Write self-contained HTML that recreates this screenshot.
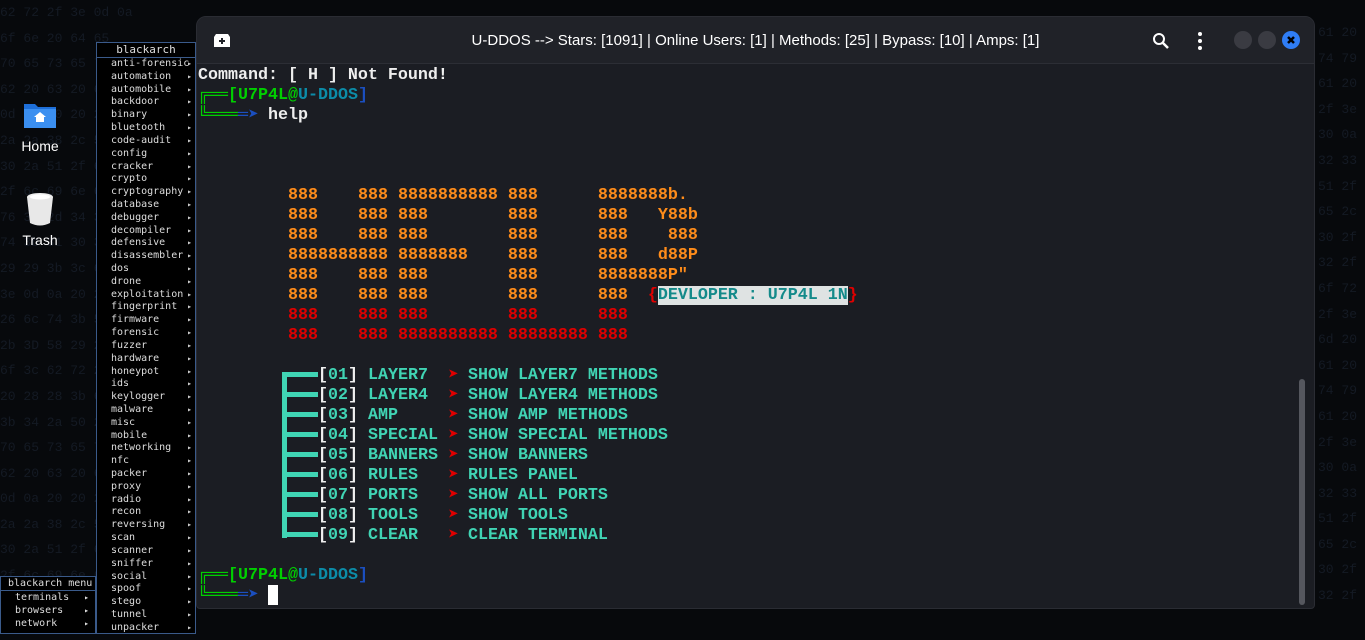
<!DOCTYPE html>
<html><head><meta charset="utf-8"><style>
*{margin:0;padding:0;box-sizing:border-box}
body{width:1365px;height:634px;background:#07090c;position:relative;overflow:hidden;font-family:"Liberation Sans",sans-serif}
.hex{position:absolute;color:#141a24;font:13px "Liberation Mono",monospace;line-height:25.6px;white-space:pre}
.menu{position:absolute;left:96px;top:42px;width:100px;height:592px;background:#000;border:1px solid #3a5a8a;font:10px "DejaVu Sans Mono",monospace;color:#ddd}
.menu .h{height:15px;text-align:center;border-bottom:1px solid #3a5a8a;line-height:14px;font-size:11px}
.menu .i{height:12.82px;line-height:12.82px;padding-left:14px;position:relative}
.menu .i:after{content:"▸";position:absolute;right:3px;font-size:8px;color:#ccc}
.bm{position:absolute;left:0;top:576px;width:96px;height:58px;background:#000;border:1px solid #3a5a8a;font:10px "DejaVu Sans Mono",monospace;color:#ddd}
.bm .h{height:14px;border-bottom:1px solid #3a5a8a;padding-left:7px;line-height:13px}
.bm .i{height:13px;line-height:13px;padding-left:14px;position:relative}
.bm .i:after{content:"▸";position:absolute;right:6px;font-size:8px}
.icon{position:absolute;color:#fff;font-size:14px;text-align:center;width:80px}
.win{position:absolute;left:196px;top:16px;width:1119px;height:593px;background:#1b1d23;border-radius:10px 10px 4px 4px;overflow:hidden;border:1px solid #2a2c33}
.tb{height:47px;background:#202228;border-bottom:1px solid #2c2e35;position:relative}
.title{position:absolute;left:0;right:0;top:15px;text-align:center;color:#fff;font-size:15px}
.t{position:absolute;font:bold 16.67px "Liberation Mono","DejaVu Sans Mono",monospace;white-space:pre;line-height:20px;color:#eee}
.o{color:#ff8c1a}.r{color:#e00000}.c{color:#40d4b4}.w{color:#f0f0f0}.g{color:#00d000}.b{color:#0c8ca8}.db{color:#1b4fc0}
.a{display:inline-block;width:10px;height:20px;line-height:20px;vertical-align:top;overflow:visible;color:#e00000;font-size:18px}
.tl{position:absolute;background:#40d4b4}
</style></head><body>
<div class="hex" style="left:0;top:0">62 72 2f 3e 0d 0a
6f 6e 20 64 65 
70 65 73 65 74
62 20 63 20 69
0d 0a 20 20 20
2a 2a 38 2c 51
30 2a 51 2f 63
2f 6c 69 6e 65
76 3d 2d 34 32
74 3b 31 30 35
29 29 3b 3c 62
3e 0d 0a 20 20
26 6c 74 3b 50
2b 3D 58 29 29
6f 3c 62 72 2f
20 28 28 3b 61
3b 34 2a 50 2a
70 65 73 65 74
62 20 63 20 69
0d 0a 20 20 20
2a 2a 38 2c 51
30 2a 51 2f 63
2f 6c 69 6e 65
76 3d 2d 34 32
74 3b 31 30 35</div>
<div class="hex" style="left:1318px;top:20px">61 20
74 79
61 20
2f 3e
30 0a
32 33
51 2f
65 2c
30 2f
32 2f
6f 72
2f 3e
6d 20
61 20
74 79
61 20
2f 3e
30 0a
32 33
51 2f
65 2c
30 2f
32 2f</div>
<svg style="position:absolute;left:24px;top:100px" width="32" height="30"><path d="M0 4h11l3 3h18v21H0z" fill="#1e6fd9"/><rect x="0" y="9" width="32" height="19" fill="#3b8ff0"/><path d="M16 12l-6 5h2v5h8v-5h2z" fill="#fff"/></svg>
<div class="icon" style="left:0;top:138px">Home</div>
<svg style="position:absolute;left:26px;top:192px" width="28" height="34"><ellipse cx="14" cy="5" rx="13" ry="4" fill="#eee"/><path d="M1 5l3 26q10 5 20 0l3-26z" fill="#e8e8e8"/><ellipse cx="14" cy="5" rx="10" ry="2.5" fill="#fff"/></svg>
<div class="icon" style="left:0;top:232px">Trash</div>
<div class="menu"><div class="h">blackarch</div>
<div class="i">anti-forensic</div><div class="i">automation</div><div class="i">automobile</div><div class="i">backdoor</div><div class="i">binary</div><div class="i">bluetooth</div><div class="i">code-audit</div><div class="i">config</div><div class="i">cracker</div><div class="i">crypto</div><div class="i">cryptography</div><div class="i">database</div><div class="i">debugger</div><div class="i">decompiler</div><div class="i">defensive</div><div class="i">disassembler</div><div class="i">dos</div><div class="i">drone</div><div class="i">exploitation</div><div class="i">fingerprint</div><div class="i">firmware</div><div class="i">forensic</div><div class="i">fuzzer</div><div class="i">hardware</div><div class="i">honeypot</div><div class="i">ids</div><div class="i">keylogger</div><div class="i">malware</div><div class="i">misc</div><div class="i">mobile</div><div class="i">networking</div><div class="i">nfc</div><div class="i">packer</div><div class="i">proxy</div><div class="i">radio</div><div class="i">recon</div><div class="i">reversing</div><div class="i">scan</div><div class="i">scanner</div><div class="i">sniffer</div><div class="i">social</div><div class="i">spoof</div><div class="i">stego</div><div class="i">tunnel</div><div class="i">unpacker</div></div>
<div class="bm"><div class="h">blackarch menu</div><div class="i">terminals</div><div class="i">browsers</div><div class="i">network</div></div>
<div class="win">
<div class="tb">
<svg style="position:absolute;left:17px;top:17px" width="16" height="13"><path d="M2 0h12l2 3v10H0V3z" fill="#fff"/><path d="M8 4v6M5 7h6" stroke="#202228" stroke-width="2"/></svg>
<div class="title">U-DDOS --&gt; Stars: [1091] | Online Users: [1] | Methods: [25] | Bypass: [10] | Amps: [1]</div>
<svg style="position:absolute;left:955px;top:15px" width="18" height="18"><circle cx="7" cy="7" r="5" stroke="#fff" stroke-width="2" fill="none"/><path d="M11 11l5 5" stroke="#fff" stroke-width="2.5"/></svg>
<svg style="position:absolute;left:999px;top:14px" width="8" height="20"><circle cx="4" cy="3" r="2" fill="#fff"/><circle cx="4" cy="10" r="2" fill="#fff"/><circle cx="4" cy="17" r="2" fill="#fff"/></svg>
<div style="position:absolute;left:1037px;top:14px;width:18px;height:18px;border-radius:50%;background:#3a3b42"></div>
<div style="position:absolute;left:1061px;top:14px;width:18px;height:18px;border-radius:50%;background:#3a3b42"></div>
<div style="position:absolute;left:1085px;top:14px;width:18px;height:18px;border-radius:50%;background:#2f7df5"></div>
<svg style="position:absolute;left:1085px;top:14px" width="18" height="18"><path d="M6 6l6 6M12 6l-6 6" stroke="#000" stroke-width="2.5"/></svg>
</div>
<div style="position:absolute;left:1102px;top:362px;width:6px;height:226px;background:#55575e;border-radius:3px"></div>
</div>
<div class="t" style="left:198px;top:66px">Command: [ H ] Not Found!</div>
<div class="t" style="left:198px;top:86px"><span class="g">╔══[U7P4L@</span><span class="b">U-DDOS</span><span class="db">]</span></div>
<div class="t" style="left:198px;top:106px"><span class="g">╚═══</span><span class="db">═<span class="a" style="color:#1b4fc0">➤</span></span> help</div>
<div class="t" style="left:288px;top:186px"><span class="o">888    888 8888888888 888      8888888b.
888    888 888        888      888   Y88b
888    888 888        888      888    888
8888888888 8888888    888      888   d88P
888    888 888        888      8888888P"
888    888 888        888      888  </span><span class="r">{</span><span style="background:#dfe3e3;color:#148a8a">DEVLOPER : U7P4L 1N</span><span class="r">}</span>
<span class="r">888    888 888        888      888
888    888 8888888888 88888888 888</span></div>
<div class="tl" style="left:282px;top:372px;width:5px;height:166px"></div>
<div class="tl" style="left:282px;top:372px;width:36px;height:5px"></div>
<div class="tl" style="left:282px;top:392px;width:36px;height:5px"></div>
<div class="tl" style="left:282px;top:412px;width:36px;height:5px"></div>
<div class="tl" style="left:282px;top:432px;width:36px;height:5px"></div>
<div class="tl" style="left:282px;top:452px;width:36px;height:5px"></div>
<div class="tl" style="left:282px;top:472px;width:36px;height:5px"></div>
<div class="tl" style="left:282px;top:492px;width:36px;height:5px"></div>
<div class="tl" style="left:282px;top:512px;width:36px;height:5px"></div>
<div class="tl" style="left:282px;top:532px;width:36px;height:5px"></div>
<div class="t c" style="left:318px;top:366px"><span class="w">[</span>01<span class="w">]</span> LAYER7  <span class="a">➤</span> SHOW LAYER7 METHODS
<span class="w">[</span>02<span class="w">]</span> LAYER4  <span class="a">➤</span> SHOW LAYER4 METHODS
<span class="w">[</span>03<span class="w">]</span> AMP     <span class="a">➤</span> SHOW AMP METHODS
<span class="w">[</span>04<span class="w">]</span> SPECIAL <span class="a">➤</span> SHOW SPECIAL METHODS
<span class="w">[</span>05<span class="w">]</span> BANNERS <span class="a">➤</span> SHOW BANNERS
<span class="w">[</span>06<span class="w">]</span> RULES   <span class="a">➤</span> RULES PANEL
<span class="w">[</span>07<span class="w">]</span> PORTS   <span class="a">➤</span> SHOW ALL PORTS
<span class="w">[</span>08<span class="w">]</span> TOOLS   <span class="a">➤</span> SHOW TOOLS
<span class="w">[</span>09<span class="w">]</span> CLEAR   <span class="a">➤</span> CLEAR TERMINAL</div>
<div class="t" style="left:198px;top:566px"><span class="g">╔══[U7P4L@</span><span class="b">U-DDOS</span><span class="db">]</span></div>
<div class="t" style="left:198px;top:586px"><span class="g">╚═══</span><span class="db">═<span class="a" style="color:#1b4fc0">➤</span></span> </div>
<div style="position:absolute;left:268px;top:585px;width:10px;height:20px;background:#fff"></div>
</body></html>
